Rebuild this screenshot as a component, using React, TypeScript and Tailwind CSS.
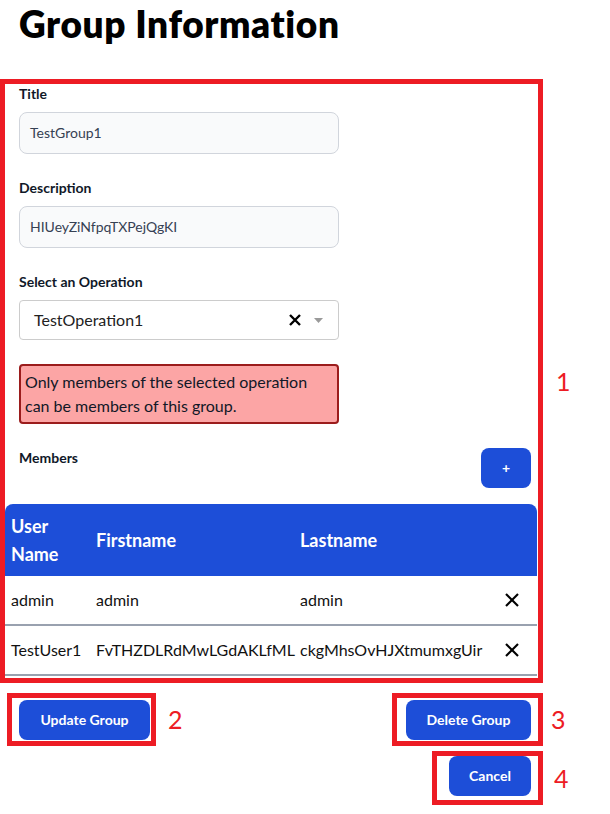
import React from "react";

const RED = "border-[#ed1c24]";

function XIcon({ className = "" }: { className?: string }) {
  return (
    <svg width="24" height="24" viewBox="0 0 24 24" fill="none" stroke="currentColor" strokeWidth="2.2" className={className}>
      <path d="M18 6 6 18" />
      <path d="M6 6l12 12" />
    </svg>
  );
}

const rows = [
  { u: "admin", f: "admin", l: "admin" },
  { u: "TestUser1", f: "FvTHZDLRdMwLGdAKLfML", l: "ckgMhsOvHJXtmumxgUir" },
];

export default function App() {
  return (
    <div className="w-[610px] bg-white text-gray-900" style={{ fontFamily: "Lato, 'Noto Sans', sans-serif" }}>
      <h1 className="pl-[19px] pt-[4px] h-[79px] text-[37px] leading-[40px] font-extrabold tracking-[0.6px] text-black">Group Information</h1>

      <div className="flex items-center">
        <div className={`w-[543px] border-[5px] ${RED} pb-[2px]`}>
          <div className="pl-[14px]">
            <label className="block text-sm font-bold mb-2 leading-5 text-gray-900">Title</label>
            <div className="w-[320px] h-[42px] bg-gray-50 border border-gray-300 rounded-lg px-[10px] flex items-center text-sm text-gray-700">TestGroup1</div>

            <label className="block text-sm font-bold mb-2 mt-6 leading-5 text-gray-900">Description</label>
            <div className="w-[320px] h-[42px] bg-gray-50 border border-gray-300 rounded-lg px-[10px] flex items-center text-sm text-gray-700">HIUeyZiNfpqTXPejQgKI</div>

            <label className="block text-sm font-bold mb-2 mt-6 leading-5 text-gray-900">Select an Operation</label>
            <div className="w-[320px] h-[40px] bg-white border border-[#cccccc] rounded flex items-center pl-[14px] pr-[15px]">
              <span className="flex-1 text-base text-[#222]">TestOperation1</span>
              <svg width="12" height="12" viewBox="0 0 12 12" fill="none" stroke="black" strokeWidth="2.4" className="mr-[13px]">
                <path d="M1 1l10 10M11 1 1 11" />
              </svg>
              <svg width="9" height="5" viewBox="0 0 9 5">
                <path d="M0 0h9L4.5 5z" fill="#9a9a9a" />
              </svg>
            </div>

            <div className="w-[320px] mt-6 bg-[#fca5a5] border-2 border-[#9b1c1c] rounded p-1 text-base leading-6 text-[#111827]">
              Only members of the selected operation can be members of this group.
            </div>

            <div className="flex justify-between items-start mt-6 pr-[7px]">
              <span className="text-sm font-bold leading-5 text-gray-900">Members</span>
              <button className="w-[50px] h-10 rounded-lg bg-[#1d4ed8] text-white text-sm font-bold">+</button>
            </div>
          </div>

          <div className="mt-4 mr-[1px] rounded-t-lg overflow-hidden">
            <div className="grid grid-cols-[85px_204px_206px_1fr] items-center bg-[#1d4ed8] text-white text-lg leading-7 font-bold py-2">
              <div className="px-[6px]">User Name</div>
              <div className="px-[6px]">Firstname</div>
              <div className="px-[6px]">Lastname</div>
              <div />
            </div>
            {rows.map((r) => (
              <div key={r.u} className="grid grid-cols-[85px_204px_206px_1fr] items-center h-[50px] border-b-2 border-gray-400 text-base text-[#111]">
                <div className="px-[6px] whitespace-nowrap">{r.u}</div>
                <div className="px-[6px] whitespace-nowrap">{r.f}</div>
                <div className="px-[6px] whitespace-nowrap">{r.l}</div>
                <div><XIcon className="text-black" /></div>
              </div>
            ))}
          </div>
        </div>
        <span className="ml-[13px] text-[25px] leading-none text-[#ed1c24]">1</span>
      </div>

      <div className="flex items-start mt-[10px]">
        <div className="flex items-center ml-[7px]">
          <div className={`border-[5px] ${RED} pl-[7px] pr-[1px] pt-[2px] pb-[1px]`}>
            <button className="w-[131px] h-10 rounded-lg bg-[#1d4ed8] text-white text-sm font-bold">Update Group</button>
          </div>
          <span className="ml-[12px] text-[25px] leading-none text-[#ed1c24]">2</span>
        </div>

        <div className="ml-auto flex flex-col">
          <div className="flex items-center">
            <div className={`border-[5px] ${RED} pl-[9px] pr-[7px] pt-[2px] pb-[1px]`}>
              <button className="w-[125px] h-10 rounded-lg bg-[#1d4ed8] text-white text-sm font-bold">Delete Group</button>
            </div>
            <span className="w-[67px] pl-[8px] text-[25px] leading-none text-[#ed1c24]">3</span>
          </div>
          <div className="flex items-center justify-end mt-[5px]">
            <div className={`border-[5px] ${RED} pl-[12px] pr-[7px] pt-0 pb-[4px]`}>
              <button className="w-[82px] h-10 rounded-lg bg-[#1d4ed8] text-white text-sm font-bold">Cancel</button>
            </div>
            <span className="w-[67px] pl-[11px] text-[25px] leading-none text-[#ed1c24]">4</span>
          </div>
        </div>
      </div>
      <div className="h-[9px]" />
    </div>
  );
}
